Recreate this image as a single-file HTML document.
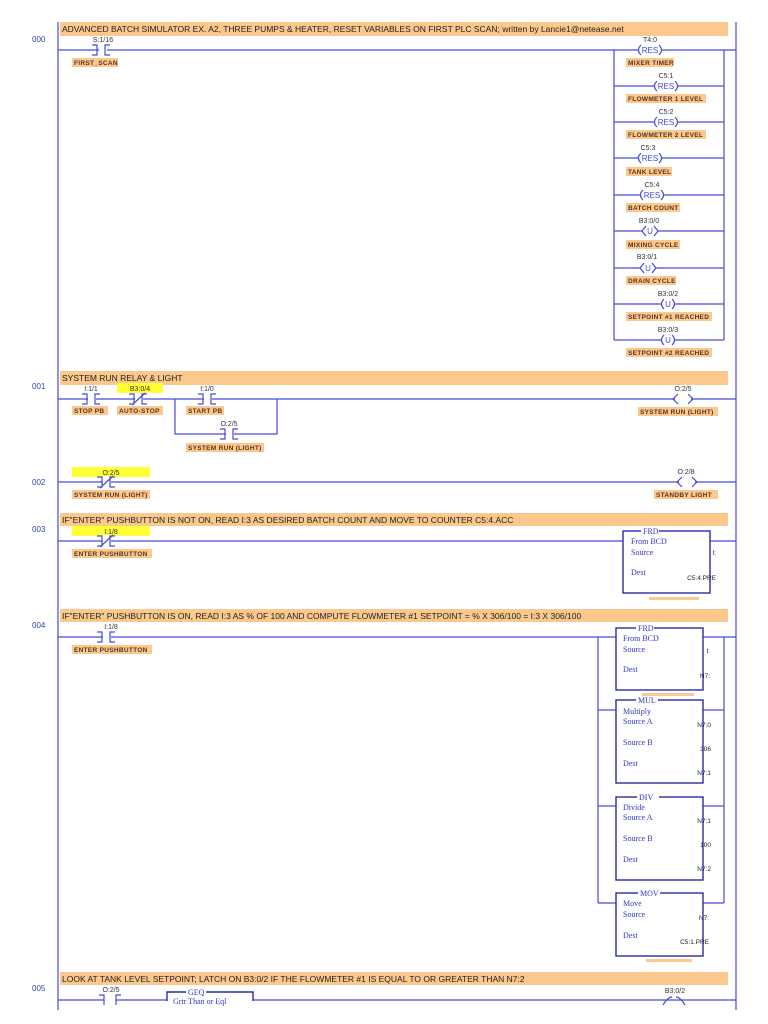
<!DOCTYPE html>
<html><head><meta charset="utf-8"><style>
html,body{margin:0;padding:0;background:#fff;width:768px;height:1024px;overflow:hidden}
svg{display:block}
.c{fill:#fcc88e}
.y{fill:#ffff33}
.t{font-family:"Liberation Sans",sans-serif;font-size:8.5px;fill:#222}
.a{font-family:"Liberation Sans",sans-serif;font-size:7px;fill:#333;text-anchor:middle}
.l{font-family:"Liberation Sans",sans-serif;font-size:6.5px;font-weight:bold;fill:#553322;letter-spacing:0.3px}
.n{font-family:"Liberation Sans",sans-serif;font-size:8px;fill:#3344bb}
.k{font-family:"Liberation Sans",sans-serif;font-size:8px;fill:#4444ee;text-anchor:middle}
.s{font-family:"Liberation Serif",serif;font-size:8px;fill:#3333cc}
.v{font-family:"Liberation Sans",sans-serif;font-size:6.5px;fill:#222;text-anchor:end}
.w{stroke:#4a4ad8;stroke-width:1.2;fill:none}
.b{stroke:#2a2aa8;stroke-width:1.4;fill:none}
</style></head><body>
<svg width="768" height="1024" viewBox="0 0 768 1024" xmlns="http://www.w3.org/2000/svg">
<path class="w" d="M58 22V1010M736 22V1010"/>
<rect class="c" x="60" y="22" width="668" height="14"/>
<text class="t" x="62" y="32">ADVANCED BATCH SIMULATOR EX. A2, THREE PUMPS &amp; HEATER,  RESET VARIABLES ON FIRST PLC SCAN; written by Lancie1@netease.net</text>
<rect class="c" x="60" y="371" width="668" height="14"/>
<text class="t" x="62" y="381">SYSTEM RUN RELAY &amp; LIGHT</text>
<rect class="c" x="60" y="513" width="668" height="13"/>
<text class="t" x="62" y="523">IF"ENTER" PUSHBUTTON IS NOT ON, READ I:3 AS DESIRED BATCH COUNT AND MOVE TO COUNTER C5:4.ACC</text>
<rect class="c" x="60" y="609" width="668" height="13"/>
<text class="t" x="62" y="619">IF"ENTER" PUSHBUTTON IS ON, READ I:3 AS % OF 100 AND COMPUTE FLOWMETER #1 SETPOINT = % X 306/100 = I:3 X 306/100</text>
<rect class="c" x="60" y="972" width="668" height="13"/>
<text class="t" x="62" y="982">LOOK AT TANK LEVEL SETPOINT; LATCH ON B3:0/2 IF THE FLOWMETER #1 IS EQUAL TO OR GREATER THAN N7:2</text>
<text class="n" x="32" y="42">000</text>
<text class="n" x="32" y="389">001</text>
<text class="n" x="32" y="485">002</text>
<text class="n" x="32" y="532">003</text>
<text class="n" x="32" y="628">004</text>
<text class="n" x="32" y="991">005</text>

<!-- RUNG 000 -->
<path class="w" d="M58 50H736M614 50V340M724 50V340M614 86H724M614 122H724M614 158H724M614 195H724M614 231H724M614 268H724M614 304H724M614 340H724"/>
<rect x="99" y="44" width="8" height="12" fill="#fff"/>
<path class="w" d="M92 45h5v10h-5M110 45h-5v10h5"/>
<text class="a" x="103" y="42">S:1/16</text>
<rect class="c" x="72" y="58" width="46" height="9"/><text class="l" x="74" y="65">FIRST_SCAN</text>

<rect x="638" y="45" width="24" height="10" fill="#fff"/><path class="w" d="M641 45q-5 5 0 10M659 45q5 5 0 10"/><text class="k" x="650" y="53">RES</text><text class="a" x="650" y="42">T4:0</text>
<rect class="c" x="626" y="58" width="48" height="9"/><text class="l" x="628" y="65">MIXER TIMER</text>
<rect x="654" y="81" width="24" height="10" fill="#fff"/><path class="w" d="M657 81q-5 5 0 10M675 81q5 5 0 10"/><text class="k" x="666" y="89">RES</text><text class="a" x="666" y="78">C5:1</text>
<rect class="c" x="626" y="94" width="80" height="9"/><text class="l" x="628" y="101">FLOWMETER 1 LEVEL</text>
<rect x="654" y="117" width="24" height="10" fill="#fff"/><path class="w" d="M657 117q-5 5 0 10M675 117q5 5 0 10"/><text class="k" x="666" y="125">RES</text><text class="a" x="666" y="114">C5:2</text>
<rect class="c" x="626" y="130" width="80" height="9"/><text class="l" x="628" y="137">FLOWMETER 2 LEVEL</text>
<rect x="638" y="153" width="24" height="10" fill="#fff"/><path class="w" d="M641 153q-5 5 0 10M659 153q5 5 0 10"/><text class="k" x="650" y="161">RES</text><text class="a" x="648" y="150">C5:3</text>
<rect class="c" x="626" y="167" width="46" height="9"/><text class="l" x="628" y="174">TANK LEVEL</text>
<rect x="640" y="190" width="24" height="10" fill="#fff"/><path class="w" d="M643 190q-5 5 0 10M661 190q5 5 0 10"/><text class="k" x="652" y="198">RES</text><text class="a" x="652" y="187">C5:4</text>
<rect class="c" x="626" y="203" width="54" height="9"/><text class="l" x="628" y="210">BATCH COUNT</text>
<rect x="643" y="226" width="14" height="10" fill="#fff"/><path class="w" d="M646 226l-4 5 4 5M654 226l4 5-4 5"/><text class="k" x="650" y="234">U</text><text class="a" x="649" y="223">B3:0/0</text>
<rect class="c" x="626" y="240" width="54" height="9"/><text class="l" x="628" y="247">MIXING CYCLE</text>
<rect x="641" y="263" width="14" height="10" fill="#fff"/><path class="w" d="M644 263l-4 5 4 5M652 263l4 5-4 5"/><text class="k" x="648" y="271">U</text><text class="a" x="647" y="259">B3:0/1</text>
<rect class="c" x="626" y="276" width="50" height="9"/><text class="l" x="628" y="283">DRAIN CYCLE</text>
<rect x="661" y="299" width="14" height="10" fill="#fff"/><path class="w" d="M664 299q-5 5 0 10M672 299q5 5 0 10"/><text class="k" x="668" y="307">U</text><text class="a" x="668" y="296">B3:0/2</text>
<rect class="c" x="626" y="312" width="86" height="9"/><text class="l" x="628" y="319">SETPOINT #1 REACHED</text>
<rect x="661" y="335" width="14" height="10" fill="#fff"/><path class="w" d="M664 335q-5 5 0 10M672 335q5 5 0 10"/><text class="k" x="668" y="343">U</text><text class="a" x="668" y="332">B3:0/3</text>
<rect class="c" x="626" y="348" width="86" height="9"/><text class="l" x="628" y="355">SETPOINT #2 REACHED</text>

<!-- RUNG 001 -->
<path class="w" d="M58 399H736M175 399V434H277V399"/>
<rect x="88" y="393" width="8" height="12" fill="#fff"/><path class="w" d="M82 394h5v10h-5M100 394h-5v10h5"/>
<text class="a" x="91" y="391">I:1/1</text>
<rect class="c" x="72" y="406" width="36" height="9"/><text class="l" x="74" y="413">STOP PB</text>
<rect class="y" x="117" y="383" width="46" height="10"/><text class="a" x="140" y="391">B3:0/4</text>
<rect x="135" y="393" width="8" height="12" fill="#fff"/><path class="w" d="M129 394h5v10h-5M147 394h-5v10h5M132 405l13-12"/>
<rect class="c" x="117" y="406" width="46" height="9"/><text class="l" x="119" y="413">AUTO-STOP</text>
<rect x="204" y="393" width="8" height="12" fill="#fff"/><path class="w" d="M198 394h5v10h-5M216 394h-5v10h5"/>
<text class="a" x="207" y="391">I:1/0</text>
<rect class="c" x="186" y="406" width="38" height="9"/><text class="l" x="188" y="413">START PB</text>
<rect x="226" y="428" width="8" height="12" fill="#fff"/><path class="w" d="M220 429h5v10h-5M238 429h-5v10h5"/>
<text class="a" x="229" y="426">O:2/5</text>
<rect class="c" x="186" y="443" width="78" height="9"/><text class="l" x="188" y="450">SYSTEM RUN (LIGHT)</text>
<rect x="675" y="394" width="16" height="10" fill="#fff"/><path class="w" d="M678 394l-5 5 5 5M688 394l5 5-5 5"/>
<text class="a" x="683" y="391">O:2/5</text>
<rect class="c" x="638" y="407" width="80" height="9"/><text class="l" x="640" y="414">SYSTEM RUN (LIGHT)</text>

<!-- RUNG 002 -->
<path class="w" d="M58 482H736"/>
<rect class="y" x="72" y="467" width="78" height="10"/><text class="a" x="111" y="475">O:2/5</text>
<rect x="103" y="476" width="8" height="12" fill="#fff"/><path class="w" d="M97 477h5v10h-5M115 477h-5v10h5M100 488l13-12"/>
<rect class="c" x="72" y="490" width="78" height="9"/><text class="l" x="74" y="497">SYSTEM RUN (LIGHT)</text>
<rect x="679" y="477" width="16" height="10" fill="#fff"/><path class="w" d="M682 477l-5 5 5 5M692 477l5 5-5 5"/>
<text class="a" x="686" y="474">O:2/8</text>
<rect class="c" x="654" y="490" width="64" height="9"/><text class="l" x="656" y="497">STANDBY LIGHT</text>

<!-- RUNG 003 -->
<path class="w" d="M58 541H623M710 541H736"/>
<rect class="y" x="72" y="526" width="78" height="10"/><text class="a" x="111" y="534">I:1/8</text>
<rect x="103" y="535" width="8" height="12" fill="#fff"/><path class="w" d="M97 536h5v10h-5M115 536h-5v10h5M100 547l13-12"/>
<rect class="c" x="72" y="549" width="80" height="9"/><text class="l" x="74" y="556">ENTER PUSHBUTTON</text>
<rect class="b" x="623" y="531" width="87" height="62"/>
<rect x="641" y="528" width="18" height="6" fill="#fff"/>
<text class="s" x="643" y="534" font-size="7">FRD</text>
<text class="s" x="631" y="544">From BCD</text><text class="s" x="631" y="555">Source</text><text class="s" x="631" y="575">Dest</text>
<text class="v" x="716" y="555">I:</text><text class="v" x="716" y="580">C5:4.PRE</text>
<rect class="c" x="649" y="597" width="50" height="3"/>

<!-- RUNG 004 -->
<path class="w" d="M58 637H616M703 637H736M598 637V903M724 637V903M598 710H616M703 710H724M598 806H616M703 806H724M598 903H616M703 903H724"/>
<rect x="103" y="631" width="8" height="12" fill="#fff"/><path class="w" d="M97 632h5v10h-5M115 632h-5v10h5"/>
<text class="a" x="111" y="629">I:1/8</text>
<rect class="c" x="72" y="645" width="80" height="9"/><text class="l" x="74" y="652">ENTER PUSHBUTTON</text>

<rect class="b" x="616" y="628" width="87" height="62"/>
<rect x="636" y="625" width="18" height="6" fill="#fff"/>
<text class="s" x="638" y="631" font-size="7">FRD</text>
<text class="s" x="623" y="641">From BCD</text><text class="s" x="623" y="652">Source</text><text class="s" x="623" y="672">Dest</text>
<text class="v" x="710" y="653">I:</text><text class="v" x="710" y="678">N7:</text>
<rect class="c" x="642" y="693" width="52" height="3"/>

<rect class="b" x="616" y="700" width="87" height="83"/>
<rect x="636" y="697" width="22" height="6" fill="#fff"/>
<text class="s" x="638" y="703" font-size="7">MUL</text>
<text class="s" x="623" y="714">Multiply</text><text class="s" x="623" y="724">Source A</text><text class="s" x="623" y="745">Source B</text><text class="s" x="623" y="766">Dest</text>
<text class="v" x="711" y="727">N7:0</text><text class="v" x="711" y="751">306</text><text class="v" x="711" y="775">N7:1</text>

<rect class="b" x="616" y="797" width="87" height="83"/>
<rect x="637" y="794" width="22" height="6" fill="#fff"/>
<text class="s" x="639" y="800" font-size="7">DIV</text>
<text class="s" x="623" y="810">Divide</text><text class="s" x="623" y="820">Source A</text><text class="s" x="623" y="841">Source B</text><text class="s" x="623" y="862">Dest</text>
<text class="v" x="711" y="823">N7:1</text><text class="v" x="711" y="847">100</text><text class="v" x="711" y="871">N7:2</text>

<rect class="b" x="616" y="893" width="87" height="63"/>
<rect x="638" y="890" width="22" height="6" fill="#fff"/>
<text class="s" x="640" y="896" font-size="7">MOV</text>
<text class="s" x="623" y="906">Move</text><text class="s" x="623" y="917">Source</text><text class="s" x="623" y="938">Dest</text>
<text class="v" x="709" y="920">N7:</text><text class="v" x="709" y="944">C5:1.PRE</text>
<rect class="c" x="646" y="959" width="46" height="3"/>

<!-- RUNG 005 -->
<path class="w" d="M58 1000H104M116 1000H167M253 1000H736"/>
<path class="w" d="M99 995h5v10M121 995h-5v10"/>
<text class="a" x="111" y="992">O:2/5</text>
<path class="b" d="M167 1001V992H186M206 992H253V1001"/>
<text class="s" x="188" y="995" font-size="7">GEQ</text>
<text class="s" x="173" y="1004" font-size="7">Grtr Than or Eql</text>
<text class="a" x="675" y="993">B3:0/2</text>
<path class="w" d="M663 1005q5-8 9-8M685 1005q-5-8-9-8"/>
</svg>
</body></html>
